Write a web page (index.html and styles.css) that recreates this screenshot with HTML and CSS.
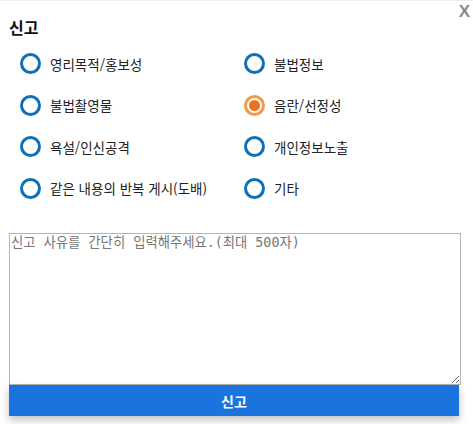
FILE: index.html
```html
<!DOCTYPE html>
<html lang="ko">
<head>
<meta charset="utf-8">
<link rel="stylesheet" href="styles.css">
</head>
<body>
<div class="modal">
  <button class="close" type="button">X</button>
  <h2 class="title">신고</h2>
  <div class="options">
    <label class="opt"><input type="radio" name="r"><span>영리목적/홍보성</span></label>
    <label class="opt"><input type="radio" name="r"><span>불법정보</span></label>
    <label class="opt"><input type="radio" name="r"><span>불법촬영물</span></label>
    <label class="opt"><input type="radio" name="r" checked><span>음란/선정성</span></label>
    <label class="opt"><input type="radio" name="r"><span>욕설/인신공격</span></label>
    <label class="opt"><input type="radio" name="r"><span>개인정보노출</span></label>
    <label class="opt"><input type="radio" name="r"><span>같은 내용의 반복 게시(도배)</span></label>
    <label class="opt"><input type="radio" name="r"><span>기타</span></label>
  </div>
  <textarea class="reason" placeholder="신고 사유를 간단히 입력해주세요.(최대 500자)"></textarea>
  <button class="submit" type="button">신고</button>
</div>
</body>
</html>
```
FILE: styles.css
```css
html, body {
  margin: 0;
  padding: 0;
  background: #fff;
}
body {
  font-family: "Noto Sans CJK KR", "Noto Sans", sans-serif;
  color: #111;
}
.modal {
  position: relative;
  width: 473px;
  height: 424px;
  box-sizing: border-box;
  border-top: 1px solid #efefef;
  padding: 0 13px 0 9px;
}
.close {
  position: absolute;
  top: 1px;
  right: 3px;
  border: 0;
  background: none;
  padding: 0;
  font-family: "Liberation Sans", Arial, sans-serif;
  font-weight: bold;
  font-size: 17px;
  color: #8a8a8a;
  line-height: 20px;
}
.title {
  margin: 0;
  padding-top: 14px;
  font-size: 16px;
  font-weight: bold;
  line-height: 24px;
  height: 26px;
}
.options {
  display: grid;
  grid-template-columns: 224px 1fr;
  grid-auto-rows: 41.5px;
  padding-left: 11px;
  align-items: center;
  margin-top: 2px;
}
.opt {
  display: flex;
  align-items: center;
  gap: 9px;
  font-size: 13.5px;
  color: #222;
}
.opt input {
  appearance: none;
  -webkit-appearance: none;
  margin: 0;
  width: 21px;
  height: 21px;
  border: 3px solid #1070b6;
  border-radius: 50%;
  box-sizing: border-box;
  background: #fff;
  position: relative;
}
.opt input:checked {
  border-color: #f2994a;
}
.opt input:checked::after {
  content: "";
  position: absolute;
  left: 2px;
  top: 2px;
  width: 11px;
  height: 11px;
  border-radius: 50%;
  background: #ea731c;
}
.reason {
  display: block;
  margin-top: 24px;
  width: 452px;
  height: 152px;
  box-sizing: border-box;
  border: 1px solid #b5b5b5;
  padding: 1px 1px;
  font-family: "DejaVu Sans Mono", "Noto Sans CJK KR", monospace;
  font-size: 13.333px;
  line-height: 16px;
  resize: vertical;
  outline: none;
}
.reason::placeholder {
  color: #777;
}
.submit {
  display: block;
  width: 450px;
  height: 31px;
  border: 0;
  margin: 0;
  background: #1a73de;
  color: #fff;
  font-family: "Noto Sans CJK KR", sans-serif;
  font-size: 14px;
  font-weight: bold;
  box-shadow: 0 4px 8px rgba(0,0,0,0.25);
}
```
